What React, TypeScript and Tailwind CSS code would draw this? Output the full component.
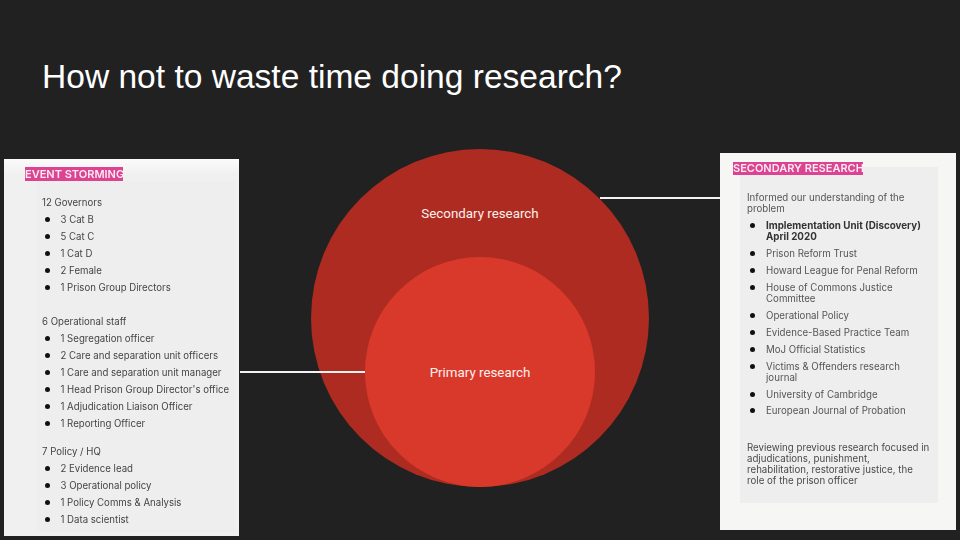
const leftGroups: { title: string; items: string[]; gap: string }[] = [
  { title: "12 Governors", gap: "mt-0", items: ["3 Cat B", "5 Cat C", "1 Cat D", "2 Female", "1 Prison Group Directors"] },
  { title: "6 Operational staff", gap: "mt-[17px]", items: ["1 Segregation officer", "2 Care and separation unit officers", "1 Care and separation unit manager", "1 Head Prison Group Director's office", "1 Adjudication Liaison Officer", "1 Reporting Officer"] },
  { title: "7 Policy / HQ", gap: "mt-[11px]", items: ["2 Evidence lead", "3 Operational policy", "1 Policy Comms & Analysis", "1 Data scientist"] },
];

const rightItems: { text: string[]; bold?: boolean }[] = [
  { text: ["Implementation Unit (Discovery)", "April 2020"], bold: true },
  { text: ["Prison Reform Trust"] },
  { text: ["Howard League for Penal Reform"] },
  { text: ["House of Commons Justice", "Committee"] },
  { text: ["Operational Policy"] },
  { text: ["Evidence-Based Practice Team"] },
  { text: ["MoJ Official Statistics"] },
  { text: ["Victims & Offenders research", "journal"] },
  { text: ["University of Cambridge"] },
  { text: ["European Journal of Probation"] },
];

function Dot() {
  return <span className="w-[5px] h-[5px] rounded-full bg-[#111111] shrink-0" />;
}

export default function App() {
  return (
    <div className="relative w-[960px] h-[540px] overflow-hidden bg-[#212121] font-['Inter',sans-serif]">
      <h1 className="pl-[42px] pt-[54px] h-[149px] text-[33.55px] leading-[46px] text-white font-['Liberation_Sans',sans-serif]">
        How not to waste time doing research?
      </h1>

      <div className="relative flex items-start pl-[4px]">
        {/* left card */}
        <div className="mt-[10px] w-[235px] h-[377px] shrink-0 bg-[#f0f0f0] relative">
          <div className="absolute left-0 top-0 right-0 h-[16px] bg-gradient-to-b from-[#fbfbfb] to-[#f0f0f0]" />
          <div className="absolute left-[33px] top-[22px] right-[4px] bottom-[4px] bg-[#eeeeee]" />
          <div className="relative blur-[0.5px]">
            <div className="ml-[21px] mt-[8px] w-[98px] h-[14px] bg-[#dc4391] text-[#fbeaf3] text-[11px] leading-[14px] font-semibold whitespace-nowrap">
              EVENT STORMING
            </div>
            <div className="ml-[38px] mt-[13px] text-[9.65px] leading-[17px] text-[#444444] whitespace-nowrap">
              {leftGroups.map((g) => (
                <div key={g.title} className={g.gap}>
                  <div>{g.title}</div>
                  {g.items.map((it) => (
                    <div key={it} className="flex items-center">
                      <span className="ml-[3px] mr-[10.5px] flex"><Dot /></span>
                      <span>{it}</span>
                    </div>
                  ))}
                </div>
              ))}
            </div>
          </div>
        </div>

        {/* circles */}
        <div className="relative ml-[72px] w-[338px] h-[338px] shrink-0 rounded-full bg-[#ad2b20] flex justify-center text-[#fdf0ee] text-[13.33px] font-['Roboto',sans-serif]">
          <span className="mt-[56px] leading-[18px]">Secondary research</span>
          <div className="absolute left-[54px] top-[108px] w-[230px] h-[230px] rounded-full bg-[#d9392b] flex justify-center">
            <span className="mt-[107px] leading-[18px]">Primary research</span>
          </div>
        </div>

        {/* right card */}
        <div className="ml-[71px] mt-[4px] w-[236px] h-[377px] shrink-0 bg-[#f6f6f5] relative">
          <div className="absolute left-[20px] top-[14px] w-[198px] h-[336px] bg-[#eeeeee]" />
          <div className="relative blur-[0.5px]">
            <div className="ml-[13px] mt-[9px] w-[130px] h-[13px] bg-[#dc4391] text-[#fbeaf3] text-[11px] leading-[13px] font-semibold whitespace-nowrap">
              SECONDARY RESEARCH
            </div>
            <div className="ml-[27px] mt-[17px] text-[9.7px] leading-[11.1px] text-[#555555] whitespace-nowrap">
              <div>Informed our understanding of the</div>
              <div>problem</div>
              <div className="mt-[6px] flex flex-col gap-[5.8px]">
                {rightItems.map((it) => (
                  <div key={it.text[0]} className="flex items-start">
                    <span className="ml-[3px] mr-[11px] mt-[3px] flex"><Dot /></span>
                    <div className={it.bold ? "font-bold text-[#333333] text-[9.8px]" : ""}>
                      {it.text.map((t) => (
                        <div key={t}>{t}</div>
                      ))}
                    </div>
                  </div>
                ))}
              </div>
              <div className="mt-[25px] text-[#4a4a4a]">
                <div>Reviewing previous research focused in</div>
                <div>adjudications, punishment,</div>
                <div>rehabilitation, restorative justice, the</div>
                <div>role of the prison officer</div>
              </div>
            </div>
          </div>
        </div>

        {/* connectors */}
        <div className="absolute left-[240px] top-[222px] w-[125px] h-[2px] bg-[#f3f3f3]" />
        <div className="absolute left-[600px] top-[48px] w-[120px] h-[2px] bg-[#f3f3f3]" />
      </div>
    </div>
  );
}
